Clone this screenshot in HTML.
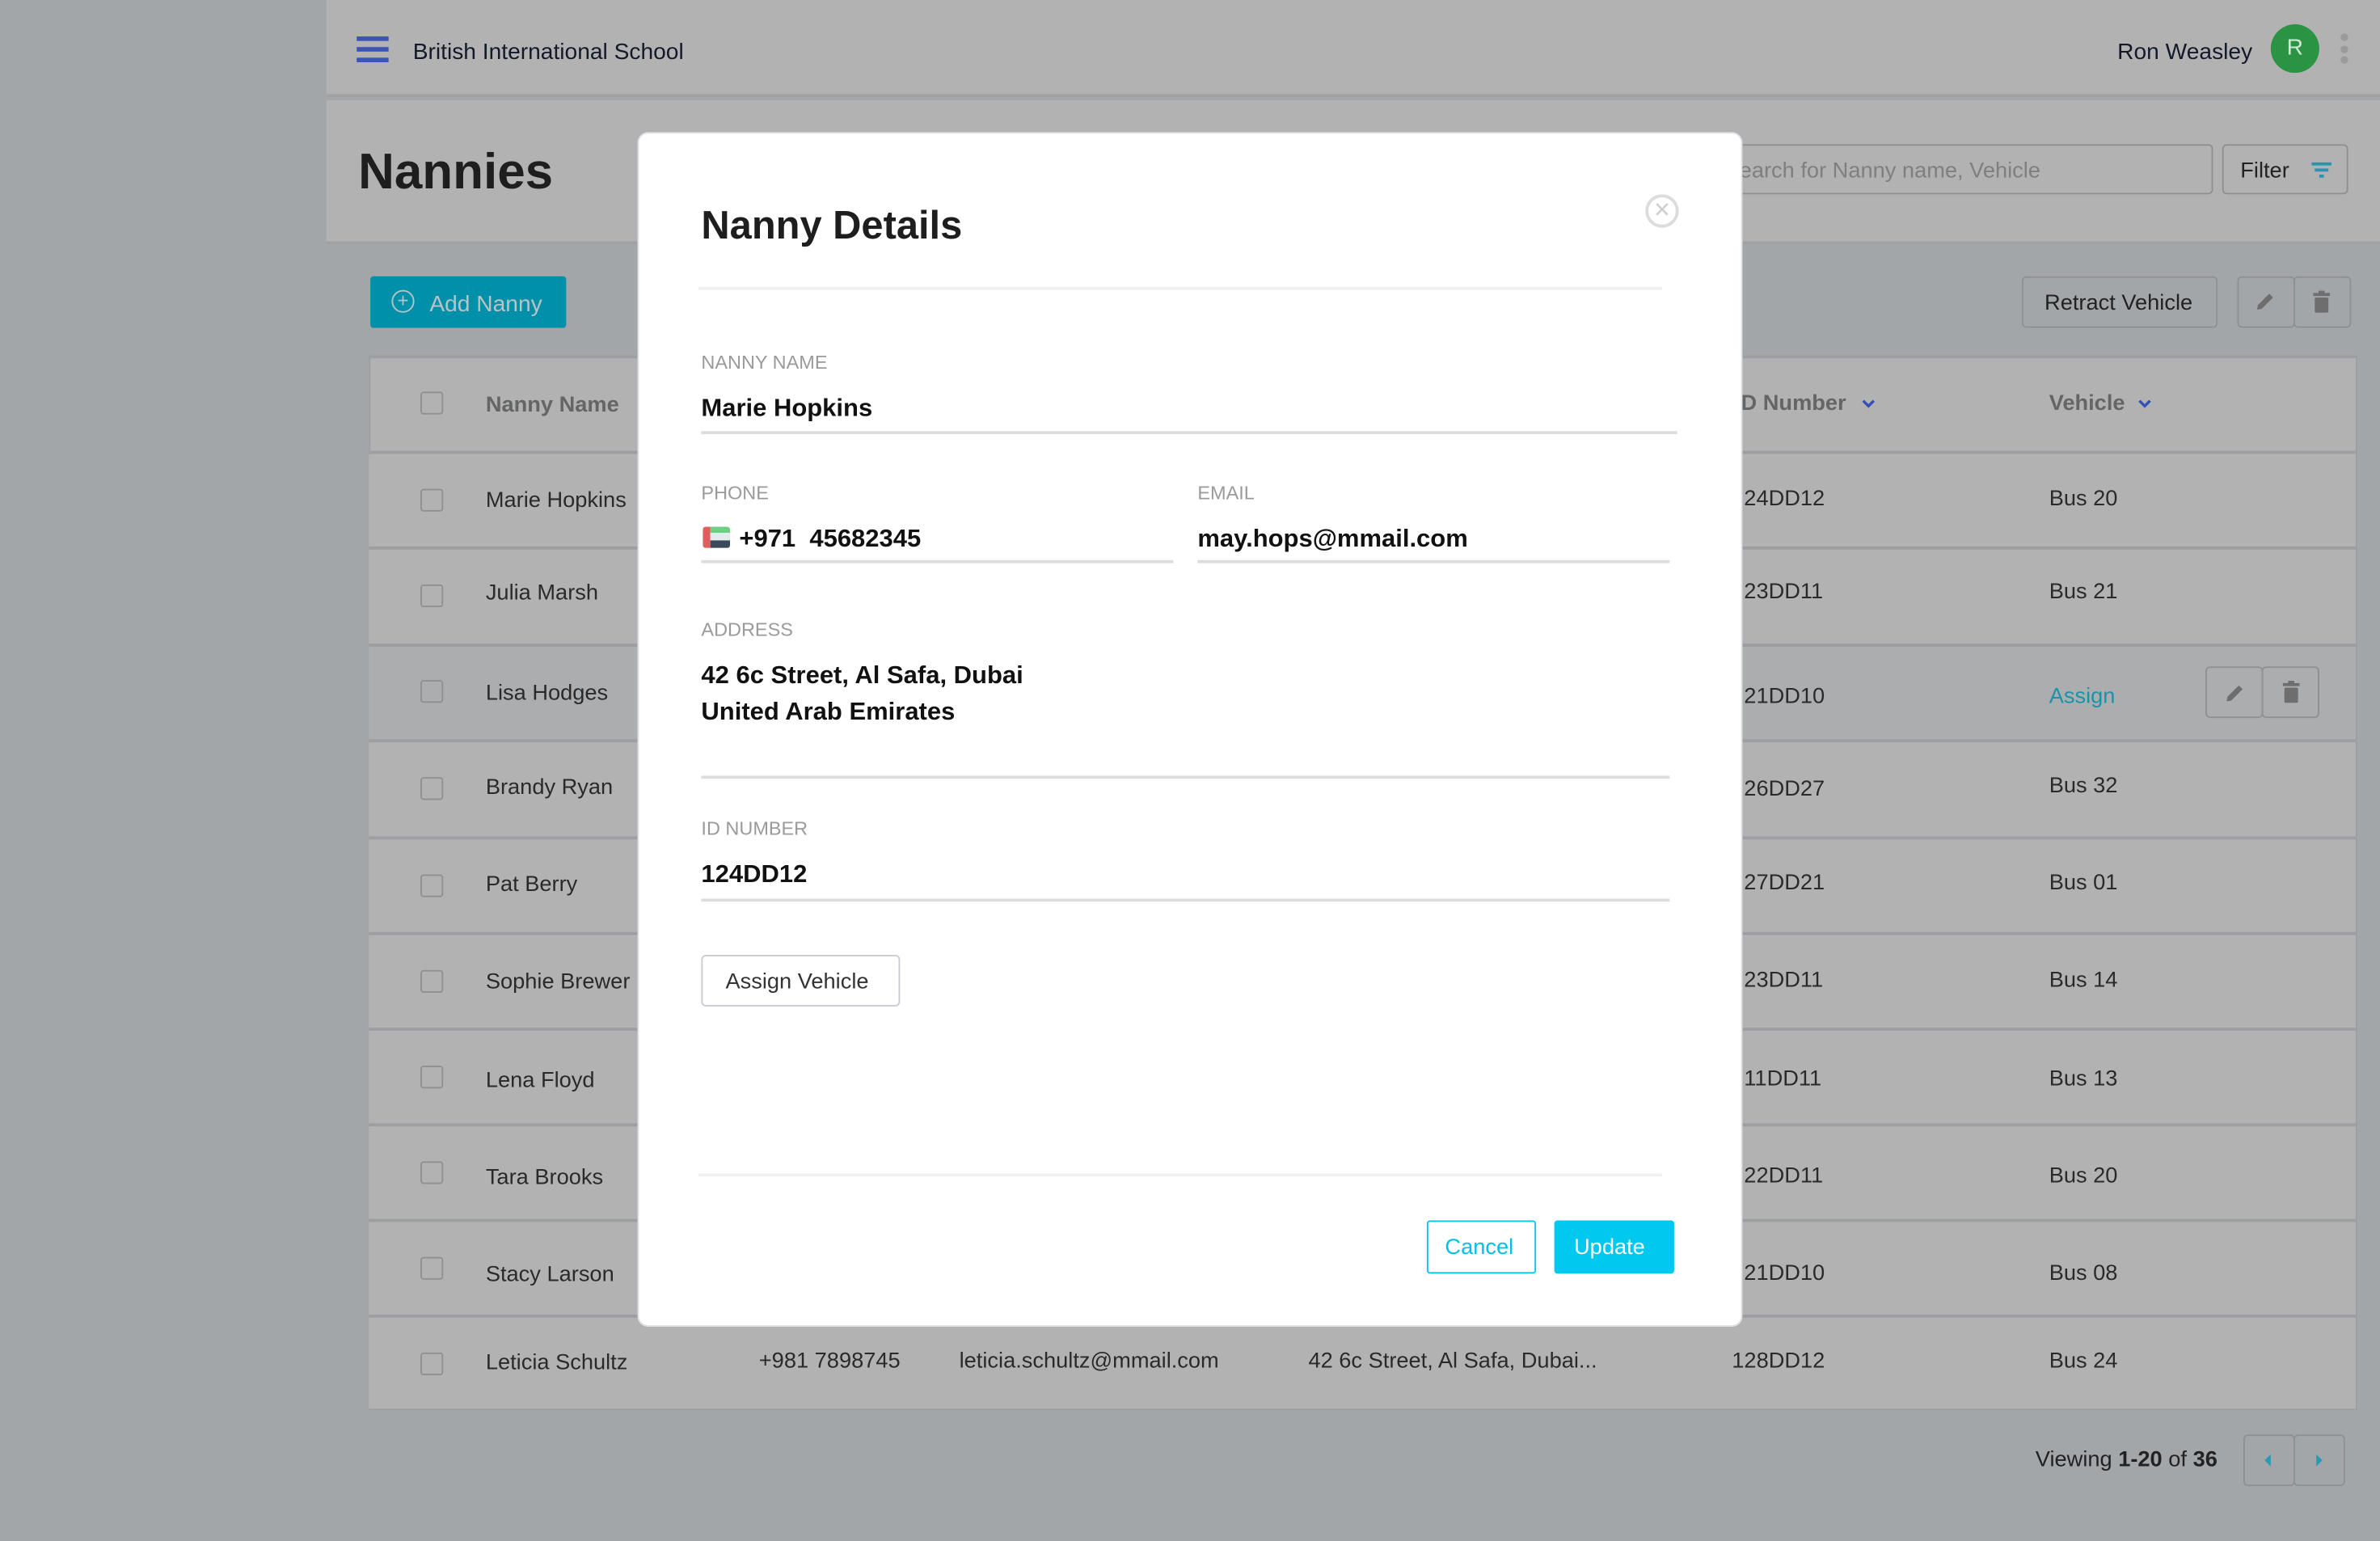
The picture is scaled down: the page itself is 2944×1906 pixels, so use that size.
<!DOCTYPE html>
<html><head><meta charset="utf-8">
<style>
*{margin:0;padding:0;box-sizing:border-box}
html,body{width:2944px;height:1906px;overflow:hidden;background:#a3a6a9;font-family:"Liberation Sans",sans-serif}
#w{position:absolute;left:0;top:0;width:1568px;height:1015px;transform:scale(1.877551);transform-origin:0 0;background:#a3a6a9}
.a{position:absolute;white-space:nowrap}
.t{font-size:14.5px;color:#2a2a2a;margin-top:2px}
.m2{margin-top:2px}
.cb{position:absolute;width:15px;height:15px;border:1.5px solid #8e9093;border-radius:2px}
.row{position:absolute;left:243px;width:1309px;border-top:2px solid #9c9ea1;background:#b2b2b2}
.btn{position:absolute;border:1.5px solid #8e9093;border-radius:3px}
.lbl{position:absolute;font-size:12.5px;color:#9a9a9a;white-space:nowrap;margin-top:1px}
.val{position:absolute;font-size:16.5px;color:#111;white-space:nowrap;font-weight:bold;margin-top:2px}
.ul{position:absolute;height:2px;background:#dcdcdc}
</style></head><body>
<div id="w">
<div class="a" style="left:215px;top:0;width:1353px;height:64px;background:#b2b2b2;border-bottom:2px solid #a0a1a3"></div>
<div class="a" style="left:235px;top:24px;width:21px;height:3px;background:#3a55b4"></div>
<div class="a" style="left:235px;top:31px;width:21px;height:3px;background:#3a55b4"></div>
<div class="a" style="left:235px;top:38px;width:21px;height:3px;background:#3a55b4"></div>
<div class="a m2" style="left:272px;top:24px;font-size:15px;color:#121a2a">British International School</div>
<div class="a m2" style="left:1395px;top:24px;font-size:15px;color:#121a2a">Ron Weasley</div>
<div class="a" style="left:1496px;top:16px;width:32px;height:32px;border-radius:50%;background:#2a9442;color:#cde9d3;font-size:15px;text-align:center;line-height:32px">R</div>
<div class="a" style="left:1542px;top:22px;width:5px;height:5px;border-radius:50%;background:#9a9a9a"></div>
<div class="a" style="left:1542px;top:30px;width:5px;height:5px;border-radius:50%;background:#9a9a9a"></div>
<div class="a" style="left:1542px;top:37px;width:5px;height:5px;border-radius:50%;background:#9a9a9a"></div>
<div class="a" style="left:215px;top:66px;width:1353px;height:95px;background:#b2b2b2;border-bottom:2px solid #a0a1a3"></div>
<div class="a m2" style="left:236px;top:92px;font-size:33px;font-weight:bold;color:#1e1e1e">Nannies</div>
<div class="a" style="left:1100px;top:95px;width:358px;height:33px;border:1.5px solid #8e9093;border-radius:3px"></div>
<div class="a m2" style="left:1146px;top:103px;font-size:14.5px;color:#7e7f81">earch for Nanny name, Vehicle</div>
<div class="btn" style="left:1464px;top:95px;width:83px;height:33px"></div>
<div class="a m2" style="left:1476px;top:103px;font-size:14.5px;color:#222">Filter</div>
<div class="a" style="left:1523px;top:107px;width:13px;height:2px;background:#2496b4"></div>
<div class="a" style="left:1525px;top:111px;width:9px;height:2px;background:#2496b4"></div>
<div class="a" style="left:1528px;top:115px;width:3px;height:2px;background:#2496b4"></div>
<div class="a" style="left:244px;top:182px;width:129px;height:34px;background:#0090a9;border-radius:2px"></div>
<div class="a" style="left:258px;top:191px;width:15px;height:15px;border:1.5px solid #b9c3c6;border-radius:50%;color:#b9c3c6;font-size:13px;line-height:12px;text-align:center">+</div>
<div class="a m2" style="left:283px;top:190px;font-size:15px;color:#b9c3c6">Add Nanny</div>
<div class="btn" style="left:1332px;top:182px;width:129px;height:34px"></div>
<div class="a m2" style="left:1347px;top:190px;font-size:14.5px;color:#222">Retract Vehicle</div>
<div class="btn" style="left:1474px;top:182px;width:38px;height:34px"></div>
<div class="btn" style="left:1511px;top:182px;width:38px;height:34px"></div>
<svg class="a" style="left:1485px;top:191px" width="15" height="15" viewBox="0 0 15 15"><path d="M2 13 L2.5 10 L10 2.5 L12.5 5 L5 12.5 Z" fill="#6e6e6e"/></svg>
<svg class="a" style="left:1522px;top:191px" width="15" height="16" viewBox="0 0 15 16"><rect x="2" y="2" width="11" height="2" fill="#6e6e6e"/><rect x="5.5" y="0.5" width="4" height="2" fill="#6e6e6e"/><rect x="3" y="5" width="9" height="10" rx="1" fill="#6e6e6e"/></svg>
<div class="a" style="left:243px;top:234px;width:1310px;height:695px;background:#b2b2b2;border:1.5px solid #9c9ea1;border-top-width:2px"></div>
<div class="cb" style="left:277px;top:258px"></div>
<div class="a m2" style="left:320px;top:257px;font-size:14.5px;font-weight:bold;color:#646566">Nanny Name</div>
<div class="a m2" style="left:1147px;top:256px;font-size:14.5px;font-weight:bold;color:#646566">D Number</div>
<svg class="a" style="left:1226px;top:262px" width="10" height="8" viewBox="0 0 10 8"><path d="M1.5 2 L5 5.5 L8.5 2" stroke="#3450b4" stroke-width="1.8" fill="none"/></svg>
<div class="a m2" style="left:1350px;top:256px;font-size:14.5px;font-weight:bold;color:#646566">Vehicle</div>
<svg class="a" style="left:1408px;top:262px" width="10" height="8" viewBox="0 0 10 8"><path d="M1.5 2 L5 5.5 L8.5 2" stroke="#3450b4" stroke-width="1.8" fill="none"/></svg>

<div class="row" style="top:297px;height:64px"></div>
<div class="row" style="top:360px;height:65px"></div>
<div class="row" style="top:424px;height:64px;background:#acadae"></div>
<div class="row" style="top:487px;height:65px"></div>
<div class="row" style="top:551px;height:64px"></div>
<div class="row" style="top:614px;height:64px"></div>
<div class="row" style="top:677px;height:64px"></div>
<div class="row" style="top:740px;height:64px"></div>
<div class="row" style="top:803px;height:64px"></div>
<div class="row" style="top:866px;height:62px"></div>

<div class="cb" style="left:277px;top:322px"></div><div class="a t" style="left:320px;top:320px">Marie Hopkins</div><div class="a t" style="left:1149px;top:319px">24DD12</div><div class="a t" style="left:1350px;top:319px">Bus 20</div>
<div class="cb" style="left:277px;top:385px"></div><div class="a t" style="left:320px;top:381px">Julia Marsh</div><div class="a t" style="left:1149px;top:380px">23DD11</div><div class="a t" style="left:1350px;top:380px">Bus 21</div>
<div class="cb" style="left:277px;top:448px"></div><div class="a t" style="left:320px;top:447px">Lisa Hodges</div><div class="a t" style="left:1149px;top:449px">21DD10</div><div class="a t" style="left:1350px;top:449px;color:#1a93ad">Assign</div>
<div class="btn" style="left:1453px;top:439px;width:38px;height:34px"></div>
<div class="btn" style="left:1490px;top:439px;width:38px;height:34px"></div>
<svg class="a" style="left:1465px;top:449px" width="15" height="15" viewBox="0 0 15 15"><path d="M2 13 L2.5 10 L10 2.5 L12.5 5 L5 12.5 Z" fill="#6e6e6e"/></svg>
<svg class="a" style="left:1502px;top:448px" width="15" height="16" viewBox="0 0 15 16"><rect x="2" y="2" width="11" height="2" fill="#6e6e6e"/><rect x="5.5" y="0.5" width="4" height="2" fill="#6e6e6e"/><rect x="3" y="5" width="9" height="10" rx="1" fill="#6e6e6e"/></svg>
<div class="cb" style="left:277px;top:512px"></div><div class="a t" style="left:320px;top:509px">Brandy Ryan</div><div class="a t" style="left:1149px;top:510px">26DD27</div><div class="a t" style="left:1350px;top:508px">Bus 32</div>
<div class="cb" style="left:277px;top:576px"></div><div class="a t" style="left:320px;top:573px">Pat Berry</div><div class="a t" style="left:1149px;top:572px">27DD21</div><div class="a t" style="left:1350px;top:572px">Bus 01</div>
<div class="cb" style="left:277px;top:639px"></div><div class="a t" style="left:320px;top:637px">Sophie Brewer</div><div class="a t" style="left:1149px;top:636px">23DD11</div><div class="a t" style="left:1350px;top:636px">Bus 14</div>
<div class="cb" style="left:277px;top:702px"></div><div class="a t" style="left:320px;top:702px">Lena Floyd</div><div class="a t" style="left:1149px;top:701px">11DD11</div><div class="a t" style="left:1350px;top:701px">Bus 13</div>
<div class="cb" style="left:277px;top:765px"></div><div class="a t" style="left:320px;top:766px">Tara Brooks</div><div class="a t" style="left:1149px;top:765px">22DD11</div><div class="a t" style="left:1350px;top:765px">Bus 20</div>
<div class="cb" style="left:277px;top:828px"></div><div class="a t" style="left:320px;top:830px">Stacy Larson</div><div class="a t" style="left:1149px;top:829px">21DD10</div><div class="a t" style="left:1350px;top:829px">Bus 08</div>
<div class="cb" style="left:277px;top:891px"></div><div class="a t" style="left:320px;top:888px">Leticia Schultz</div><div class="a t" style="left:500px;top:887px">+981 7898745</div><div class="a t" style="left:632px;top:887px">leticia.schultz@mmail.com</div><div class="a t" style="left:862px;top:887px">42 6c Street, Al Safa, Dubai...</div><div class="a t" style="left:1141px;top:887px">128DD12</div><div class="a t" style="left:1350px;top:887px">Bus 24</div>
<div class="a m2" style="left:1341px;top:952px;font-size:14.5px;color:#222">Viewing <b>1-20</b> of <b>36</b></div>
<div class="btn" style="left:1478px;top:945px;width:34px;height:34px"></div>
<div class="btn" style="left:1511px;top:945px;width:34px;height:34px"></div>
<div class="a" style="left:1492px;top:958px;width:0;height:0;border-top:4px solid transparent;border-bottom:4px solid transparent;border-right:4px solid #2a9ab4"></div>
<div class="a" style="left:1526px;top:958px;width:0;height:0;border-top:4px solid transparent;border-bottom:4px solid transparent;border-left:4px solid #2a9ab4"></div>
<div class="a" style="left:420px;top:87px;width:728px;height:787px;background:#fff;border-radius:7px;border:1px solid #dfe1e6"></div>
<div class="a" style="left:462px;top:133px;font-size:26px;color:#1e1e1e;font-weight:bold">Nanny Details</div>
<div class="a" style="left:1084px;top:128px;width:22px;height:22px;border:2px solid #dcdcdc;border-radius:50%;color:#cfcfcf;font-size:14px;line-height:17px;text-align:center">&#x2715;</div>
<div class="a" style="left:460px;top:189px;width:635px;height:2px;background:#f0f0f0"></div>
<div class="lbl" style="left:462px;top:231px">NANNY NAME</div>
<div class="val" style="left:462px;top:258px">Marie Hopkins</div>
<div class="ul" style="left:462px;top:284px;width:643px"></div>
<div class="lbl" style="left:462px;top:317px">PHONE</div>
<div class="a" style="left:463px;top:347px;width:18px;height:14px;border-radius:2px;overflow:hidden"><div style="position:absolute;left:0;top:0;width:5px;height:14px;background:#df5f5f"></div><div style="position:absolute;left:5px;top:0;width:13px;height:4px;background:#6ccf84"></div><div style="position:absolute;left:5px;top:4px;width:13px;height:5px;background:#e6eaef"></div><div style="position:absolute;left:5px;top:9px;width:13px;height:5px;background:#3a4a5a"></div></div>
<div class="val" style="left:487px;top:344px">+971&nbsp;&nbsp;45682345</div>
<div class="ul" style="left:462px;top:369px;width:311px"></div>
<div class="lbl" style="left:789px;top:317px">EMAIL</div>
<div class="val" style="left:789px;top:344px">may.hops@mmail.com</div>
<div class="ul" style="left:789px;top:369px;width:311px"></div>
<div class="lbl" style="left:462px;top:407px">ADDRESS</div>
<div class="val" style="left:462px;top:434px">42 6c Street, Al Safa, Dubai</div>
<div class="val" style="left:462px;top:458px">United Arab Emirates</div>
<div class="ul" style="left:462px;top:511px;width:638px"></div>
<div class="lbl" style="left:462px;top:538px">ID NUMBER</div>
<div class="val" style="left:462px;top:565px">124DD12</div>
<div class="ul" style="left:462px;top:592px;width:638px"></div>
<div class="a" style="left:462px;top:629px;width:131px;height:34px;border:1.5px solid #c9ccd4;border-radius:3px"></div>
<div class="a m2" style="left:478px;top:637px;font-size:14.5px;color:#333">Assign Vehicle</div>
<div class="a" style="left:460px;top:773px;width:635px;height:2px;background:#f0f0f0"></div>
<div class="a" style="left:940px;top:804px;width:72px;height:35px;border:1.5px solid #00c8ee;border-radius:2px"></div>
<div class="a m2" style="left:952px;top:812px;font-size:14.5px;color:#00c0e8">Cancel</div>
<div class="a" style="left:1024px;top:804px;width:79px;height:35px;background:#00c8ee;border-radius:2px"></div>
<div class="a m2" style="left:1037px;top:812px;font-size:14.5px;color:#fff">Update</div>
</div>
</body></html>
